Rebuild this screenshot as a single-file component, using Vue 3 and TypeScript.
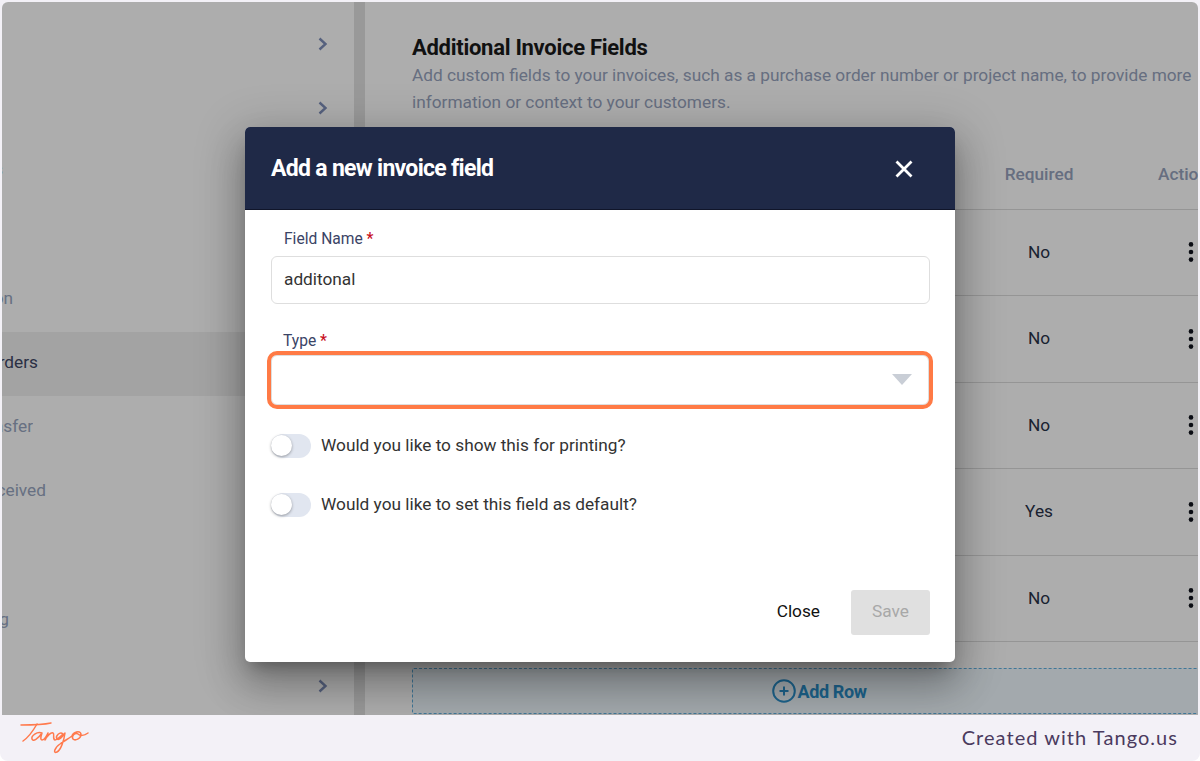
<script setup lang="ts">
interface SideRow { text: string; end: number; active?: boolean; chevron?: boolean; link?: boolean }
const sideRows: SideRow[] = [
  { text: '', end: 0, chevron: true },
  { text: '', end: 0, chevron: true },
  { text: 'Invoices', end: 1, link: true },
  { text: '', end: 0 },
  { text: 'Reconciliation', end: 11 },
  { text: 'Purchase Orders', end: 36, active: true },
  { text: 'Stock Transfer', end: 31 },
  { text: 'Goods Received', end: 44 },
  { text: '', end: 0 },
  { text: 'Costing', end: 7 },
  { text: '', end: 0, chevron: true },
]
const tableRows: string[] = ['No', 'No', 'No', 'Yes', 'No']
</script>

<template>
  <div class="page">
    <main class="stage">
      <aside class="sidebar">
        <div v-for="(row, i) in sideRows" :key="i" class="side-row" :class="{ active: row.active, link: row.link }">
          <span v-if="row.text" class="side-label" :style="{ width: row.end + 'px' }">{{ row.text }}</span>
          <svg v-if="row.chevron" class="chevron" width="12" height="16" viewBox="0 0 12 16" fill="none">
            <path d="M2.500 2.500 8.500 8l-6 5.500" stroke="currentColor" stroke-width="2.400" />
          </svg>
        </div>
      </aside>
      <div class="divider"></div>
      <section class="content">
        <h2 class="content-title">Additional Invoice Fields</h2>
        <p class="content-desc">Add custom fields to your invoices, such as a purchase order number or project name, to provide more information or context to your customers.</p>
        <div class="table">
          <div class="tr th">
            <span></span>
            <span class="cell">Required</span>
            <span class="cell cell-action">Actions</span>
          </div>
          <div v-for="(value, i) in tableRows" :key="i" class="tr">
            <span></span>
            <span class="cell cell-value">{{ value }}</span>
            <span class="cell">
              <svg width="6" height="22" viewBox="0 0 6 22" fill="#10131c">
                <circle cx="3" cy="3.400" r="2.300" />
                <circle cx="3" cy="11" r="2.300" />
                <circle cx="3" cy="18.600" r="2.300" />
              </svg>
            </span>
          </div>
        </div>
        <div class="add-row">
          <svg width="24" height="24" viewBox="0 0 24 24" fill="none" stroke="currentColor" stroke-width="2">
            <circle cx="12" cy="12" r="10.800" />
            <path d="M12 7.500v9M7.500 12h9" />
          </svg>
          <span>Add Row</span>
        </div>
      </section>

      <div class="overlay">
        <div class="modal">
          <header class="modal-head">
            <h1 class="modal-title">Add a new invoice field</h1>
            <svg class="modal-x" width="20" height="20" viewBox="0 0 20 20" fill="none" stroke="#fff" stroke-width="2.800">
              <path d="M2.500 2.500l15 15M17.500 2.500l-15 15" />
            </svg>
          </header>
          <div class="modal-body">
            <label class="field-label">Field Name <b>*</b></label>
            <div class="input">additonal</div>
            <label class="field-label type-label">Type <b>*</b></label>
            <div class="select">
              <svg width="20" height="11" viewBox="0 0 20 11"><path d="M0 0h20L10 11z" fill="#c9ced6" /></svg>
              <div class="highlight"></div>
            </div>
            <div class="toggle-row first">
              <span class="toggle"><i></i></span>
              <span class="toggle-text">Would you like to show this for printing?</span>
            </div>
            <div class="toggle-row">
              <span class="toggle"><i></i></span>
              <span class="toggle-text">Would you like to set this field as default?</span>
            </div>
          </div>
          <footer class="modal-foot">
            <button class="btn-close" type="button">Close</button>
            <button class="btn-save" type="button">Save</button>
          </footer>
        </div>
      </div>
    </main>
    <footer class="brand">
      <svg width="72" height="34" viewBox="19 723 72 34" fill="none" stroke="#ff7a4d" stroke-width="1.500" stroke-linecap="round" stroke-linejoin="round">
        <path d="M21 727C30 727 42 727 51 725" />
        <path d="M37 726C33 733 29 739 23 743" />
        <path d="M42 735C37 733 31 738 32 741C33 744 38 741 42 735C41 738 40 742 42 742C44 742 46 739 48 735C47 738 46 741 45 742C47 738 51 734 53 735C55 736 52 741 55 742C57 742 60 739 63 736C60 733 55 738 57 741C59 743 62 739 65 735C64 742 61 752 57 754C53 756 54 750 60 746C64 743 68 741 72 738C73 734 80 732 81 736C81 741 75 743 73 741C71 738 75 734 78 736C80 738 84 738 88 735" />
      </svg>
      <span class="brand-text">Created with Tango.us</span>
    </footer>
  </div>
</template>

<style scoped>
.page {
  width: 1200px;
  height: 761px;
  display: flex;
  flex-direction: column;
  background: #f3f1f7;
  border-radius: 0 0 8px 8px;
  overflow: hidden;
  font-family: Roboto, "Liberation Sans", sans-serif;
}
.stage {
  position: relative;
  display: flex;
  height: 713px;
  margin: 2px 2px 0;
  flex: none;
  background: #fff;
  border-radius: 6px 6px 0 0;
  overflow: hidden;
}
.sidebar {
  width: 352px;
  flex: none;
  padding-top: 9px;
  box-sizing: border-box;
}
.side-row {
  position: relative;
  height: 64.200px;
  display: flex;
  align-items: center;
  justify-content: space-between;
  padding: 0 25px 4px 0;
  box-sizing: border-box;
  font-size: 17.250px;
  color: #98a6c0;
}
.side-row.active {
  background: #f0f0f0;
  color: #3e4765;
}
.side-row.link {
  color: #6f9fe0;
}
.side-label {
  display: flex;
  justify-content: flex-end;
  overflow: hidden;
  white-space: nowrap;
  line-height: 20px;
}
.chevron {
  margin: 6px 0 0 auto;
  color: #7f8fba;
}
.divider {
  width: 11px;
  flex: none;
  background: #e2e2e2;
}
.content {
  flex: 1;
  min-width: 0;
  padding: 33px 0 0 47px;
  overflow: hidden;
}
.content-title {
  margin: 0;
  font-size: 22px;
  line-height: 26px;
  font-weight: 700;
  letter-spacing: -0.280px;
  color: #1a1a1a;
  white-space: nowrap;
}
.content-desc {
  margin: 1px 0 0;
  width: 800px;
  font-size: 17.250px;
  line-height: 27px;
  color: #97a3bd;
}
.table {
  width: 864px;
  margin-top: 22.500px;
}
.tr {
  display: grid;
  grid-template-columns: 560px 134px 170px;
  height: 86.500px;
  align-items: center;
  border-bottom: 1px solid #dcdcdc;
  box-sizing: border-box;
  font-size: 17.250px;
  color: #293248;
}
.th {
  height: 71px;
  font-weight: 500;
  color: #97a3bd;
}
.cell {
  display: flex;
  justify-content: center;
  align-items: center;
}
.cell-value {
  margin-bottom: 1px;
}
.cell-action {
  justify-content: flex-start;
  padding-left: 52px;
}
.add-row {
  display: flex;
  align-items: center;
  justify-content: center;
  gap: 2px;
  width: 816px;
  height: 46px;
  margin-top: 26px;
  padding-right: 2px;
  box-sizing: border-box;
  background: #f0f9ff;
  border: 1px dashed #5fb0e0;
  border-radius: 2px;
  font-size: 18px;
  font-weight: 700;
  letter-spacing: -0.400px;
  color: #2c93ce;
}
.overlay {
  position: absolute;
  inset: 0;
  display: flex;
  justify-content: center;
  align-items: flex-start;
  padding-top: 125px;
  background: rgba(0, 0, 0, 0.32);
}
.modal {
  width: 710px;
  height: 535px;
  flex: none;
  display: flex;
  flex-direction: column;
  background: #fff;
  border-radius: 5px;
  overflow: hidden;
  box-shadow: 0 11px 15px -7px rgba(0, 0, 0, 0.28), 0 24px 38px 3px rgba(0, 0, 0, 0.2), 0 9px 46px 8px rgba(0, 0, 0, 0.17);
}
.modal-head {
  height: 83px;
  flex: none;
  display: flex;
  align-items: center;
  justify-content: space-between;
  padding: 0 41px 0 26px;
  box-sizing: border-box;
  background: #1f2947;
  border-bottom: 1px solid #10152a;
}
.modal-title {
  margin: 0;
  font-size: 23px;
  font-weight: 700;
  letter-spacing: -0.700px;
  color: #fff;
  white-space: nowrap;
}
.modal-x {
  margin-top: 2px;
}
.modal-body {
  flex: 1;
  padding: 0 25px 0 26px;
}
.field-label {
  display: block;
  margin: 20px 0 0 13px;
  font-size: 15.600px;
  line-height: 18px;
  color: #3a4466;
}
.field-label b {
  color: #c8101e;
  font-weight: 500;
}
.type-label {
  margin: 28px 0 0 12px;
}
.input {
  display: flex;
  align-items: center;
  height: 48px;
  margin-top: 8px;
  padding: 0 0 2px 12px;
  box-sizing: border-box;
  border: 1px solid #dedede;
  border-radius: 6px;
  font-size: 17.250px;
  color: #333;
}
.select {
  position: relative;
  display: flex;
  align-items: center;
  justify-content: flex-end;
  height: 50px;
  margin: 5px 1px 0 0;
  padding: 0 16px 2px 0;
  box-sizing: border-box;
  border: 1px solid #dedede;
  border-radius: 6px;
}
.highlight {
  position: absolute;
  inset: -5px;
  border: 4px solid #ff7a45;
  border-radius: 10px;
}
.toggle-row {
  display: flex;
  align-items: center;
  gap: 10px;
  height: 24px;
  margin-top: 35px;
  font-size: 17.250px;
  color: #333;
}
.toggle-row.first {
  margin-top: 29px;
}
.toggle-text {
  margin-bottom: 2px;
}
.toggle {
  position: relative;
  width: 40px;
  height: 24px;
  flex: none;
  border-radius: 12px;
  background: #e1e6f0;
}
.toggle i {
  position: absolute;
  left: 0;
  top: 1px;
  width: 21px;
  height: 21px;
  border-radius: 50%;
  background: #fff;
  box-shadow: 0 1px 3px rgba(0, 0, 0, 0.35);
}
.modal-foot {
  display: flex;
  justify-content: flex-end;
  align-items: center;
  gap: 31px;
  padding: 0 25px 27px 26px;
}
.modal-foot button {
  font-family: inherit;
  font-size: 17.250px;
  border: 0;
  padding: 0 0 3px;
}
.btn-close {
  background: none;
  color: #111;
  font-weight: 400;
}
.btn-save {
  width: 79px;
  height: 45px;
  background: #e0e0e0;
  color: #a8a8a8;
  border-radius: 3px;
}
.brand {
  flex: 1;
  display: flex;
  align-items: center;
  justify-content: space-between;
  padding: 0 22px 0 19px;
}
.brand-text {
  font-family: Lato, "Liberation Sans", sans-serif;
  font-size: 20px;
  letter-spacing: 1.050px;
  margin-bottom: 2px;
  color: #4a3a5e;
}
</style>

<style>
body { background: #fff; }
</style>
